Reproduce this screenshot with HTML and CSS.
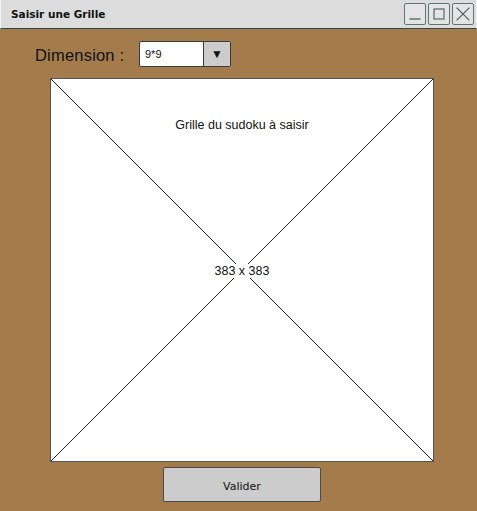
FILE: index.html
```html
<!DOCTYPE html>
<html>
<head>
<meta charset="utf-8">
<link rel="stylesheet" href="styles.css">
</head>
<body>
<div class="window">
  <div class="titlebar">
    <span class="title">Saisir une Grille</span>
    <div class="controls">
      <span class="ctl"><svg width="22" height="22" viewBox="0 0 22 22"><line x1="5" y1="16.5" x2="17" y2="16.5" stroke="#4f6b6b" stroke-width="1.5"/></svg></span>
      <span class="ctl"><svg width="22" height="22" viewBox="0 0 22 22"><rect x="5.5" y="5.5" width="11" height="11" fill="none" stroke="#4f6b6b" stroke-width="1.3"/></svg></span>
      <span class="ctl"><svg width="22" height="22" viewBox="0 0 22 22"><path d="M4 4 L18 18 M18 4 L4 18" stroke="#3f5b5b" stroke-width="1.2"/></svg></span>
    </div>
  </div>
  <div class="content">
    <div class="dim-row">
      <span class="dim-label">Dimension :</span>
      <div class="combo">
        <span class="combo-value">9*9</span>
        <span class="combo-btn">&#9660;</span>
      </div>
    </div>
    <div class="main">
      <div class="canvas">
        <svg class="cross" viewBox="0 0 100 100" preserveAspectRatio="none">
          <line x1="0" y1="0" x2="100" y2="100" stroke="#222" stroke-width="1" vector-effect="non-scaling-stroke"/>
          <line x1="100" y1="0" x2="0" y2="100" stroke="#222" stroke-width="1" vector-effect="non-scaling-stroke"/>
        </svg>
        <div class="canvas-title">Grille du sudoku à saisir</div>
        <div class="canvas-size">383 x 383</div>
      </div>
      <button class="validate">Valider</button>
    </div>
  </div>
</div>
</body>
</html>
```
FILE: styles.css
```css
html, body {
  margin: 0;
  padding: 0;
}
body {
  width: 477px;
  height: 511px;
  overflow: hidden;
  background: #a47c4c;
  font-family: "Liberation Sans", Arial, sans-serif;
}
.window {
  width: 477px;
  height: 511px;
  display: flex;
  flex-direction: column;
}
.titlebar {
  height: 29px;
  box-sizing: border-box;
  background: #dcdcdc;
  border-bottom: 1px solid #2f4a4a;
  border-left: 1px solid #eef2f2;
  border-right: 1px solid #eef2f2;
  display: flex;
  align-items: center;
  justify-content: space-between;
  padding: 0 2px 0 10px;
}
.title {
  font-family: "DejaVu Sans", sans-serif;
  font-weight: bold;
  font-size: 10.5px;
  color: #111;
  margin-top: 0;
}
.controls {
  display: flex;
  gap: 2px;
  margin-top: -1px;
}
.ctl {
  width: 22px;
  height: 22px;
  box-sizing: border-box;
  border: 1.5px solid #5d7777;
  border-radius: 2px;
  background: #e4e4e4;
  display: flex;
  align-items: center;
  justify-content: center;
}
.ctl svg {
  width: 20px;
  height: 20px;
}
.content {
  flex: 1;
  display: flex;
  flex-direction: column;
  padding-top: 12px;
}
.dim-row {
  display: flex;
  align-items: center;
  padding-left: 35px;
  height: 26px;
}
.dim-label {
  font-size: 16.5px;
  color: #111;
  width: 104px;
  letter-spacing: 0.2px;
  padding-top: 3px;
}
.combo {
  display: flex;
  width: 92px;
  height: 26px;
  box-sizing: border-box;
  border: 1px solid #3a3a3a;
  border-radius: 2px;
  background: #fff;
}
.combo-value {
  flex: 1;
  font-size: 11px;
  padding-left: 5px;
  line-height: 24px;
  color: #111;
}
.combo-btn {
  width: 26px;
  background: #cccccc;
  border-left: 1px solid #3a3a3a;
  font-size: 12px;
  line-height: 24px;
  text-align: center;
  color: #111;
}
.main {
  display: flex;
  flex-direction: column;
  align-items: center;
  width: 384px;
  margin-left: 50px;
  margin-top: 11px;
}
.canvas {
  position: relative;
  width: 384px;
  height: 384px;
  box-sizing: border-box;
  background: #fff;
  border: 1.5px solid #555;
}
.cross {
  position: absolute;
  inset: 0;
  width: 100%;
  height: 100%;
}
.canvas-title {
  position: absolute;
  top: 39px;
  left: 0;
  right: 0;
  text-align: center;
  font-size: 12.5px;
  color: #111;
}
.canvas-size {
  position: absolute;
  top: 185px;
  left: 50%;
  transform: translateX(-50%);
  background: #fff;
  font-size: 12.5px;
  color: #111;
  padding: 0 2px;
  white-space: nowrap;
}
.validate {
  margin-top: 5px;
  width: 158px;
  height: 35px;
  box-sizing: border-box;
  background: #cccccc;
  border: 1.5px solid #4a4a4a;
  border-radius: 2px;
  font-family: "DejaVu Sans", sans-serif;
  font-size: 11px;
  color: #111;
  padding: 3px 0 0 0;
}
```
